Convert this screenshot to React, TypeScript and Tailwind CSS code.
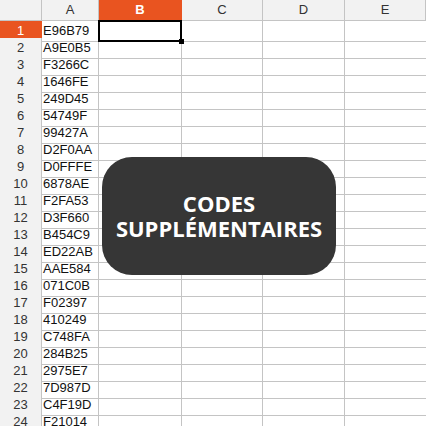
const codes = [
  "E96B79", "A9E0B5", "F3266C", "1646FE", "249D45", "54749F",
  "99427A", "D2F0AA", "D0FFFE", "6878AE", "F2FA53", "D3F660",
  "B454C9", "ED22AB", "AAE584", "071C0B", "F02397", "410249",
  "C748FA", "284B25", "2975E7", "7D987D", "C4F19D", "F21014", "",
];

const cols = ["A", "B", "C", "D", "E"];

const grid = "grid grid-cols-[42px_57px_83px_81px_82px_1fr]";

export default function App() {
  return (
    <div className="relative h-[426px] w-[426px] overflow-hidden bg-white font-['Liberation_Sans',Arial,sans-serif] text-[13px] text-[#111]">
      <div className={`${grid} h-[21px]`}>
        <div className="border-r border-b border-[#c4c4c4] bg-[#f2f2f2]" />
        {cols.map((c) =>
          c === "B" ? (
            <div
              key={c}
              className="flex items-center justify-center border-r border-b border-[#e95420] bg-[#e95420] font-bold text-white"
            >
              {c}
            </div>
          ) : (
            <div
              key={c}
              className="flex items-center justify-center border-r border-b border-[#c4c4c4] bg-[#f2f2f2] text-[#333]"
            >
              {c}
            </div>
          )
        )}
      </div>

      {codes.map((code, i) => (
        <div key={i} className={`${grid} h-[17px]`}>
          {i === 0 ? (
            <div className="flex items-center justify-center border-r border-b border-[#e95420] bg-[#e95420] text-white">
              1
            </div>
          ) : (
            <div className="flex items-center justify-center border-r border-b border-[#c4c4c4] bg-[#f2f2f2] text-[#333]">
              {i + 1}
            </div>
          )}
          <div className="flex items-center border-r border-b border-[#c4c4c4] pl-[1px] leading-none">
            {code}
          </div>
          {i === 0 ? (
            <div className="relative -ml-px -mt-px border-2 border-black">
              <span className="absolute -right-[4px] -bottom-[4px] h-[5px] w-[5px] bg-black" />
            </div>
          ) : (
            <div className="border-r border-b border-[#c4c4c4]" />
          )}
          <div className="border-r border-b border-[#c4c4c4]" />
          <div className="border-r border-b border-[#c4c4c4]" />
          <div className="border-b border-[#c4c4c4]" />
        </div>
      ))}

      <div className="absolute left-[102px] top-[157px] flex h-[118px] w-[234px] flex-col items-center justify-center rounded-[30px] bg-[#363636] font-['Open_Sans',sans-serif] text-[22px] font-bold leading-[25px] text-white">
        <span>CODES</span>
        <span>SUPPLÉMENTAIRES</span>
      </div>
    </div>
  );
}
